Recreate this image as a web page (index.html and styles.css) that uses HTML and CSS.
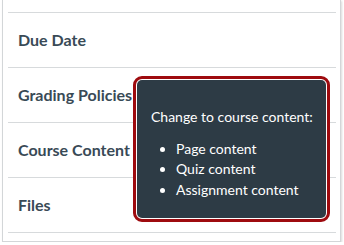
FILE: index.html
```html
<!DOCTYPE html>
<html lang="en">
<head>
    <meta charset="UTF-8">
    <meta name="viewport" content="width=device-width, initial-scale=1.0">
    <title>Course Import</title>
    <link rel="stylesheet" href="styles.css">
</head>
<body>
    <div class="panel">
        <ul class="settingsList">
            <li class="settingRow topRow"></li>
            <li class="settingRow">Due Date</li>
            <li class="settingRow">Grading Policies</li>
            <li class="settingRow">Course Content &amp;</li>
            <li class="settingRow">Files</li>
        </ul>

        <div class="callout">
            <div class="calloutInner">
                <p class="calloutTitle">Change to course content:</p>
                <ul class="calloutList">
                    <li>Page content</li>
                    <li>Quiz content</li>
                    <li>Assignment content</li>
                </ul>
            </div>
        </div>
    </div>
</body>
</html>
```

FILE: styles.css
```css
body {
    margin: 0;
    background-color: #fff;
    font-family: Lato, "Open Sans", sans-serif;
}
.panel {
    position: relative;
    margin-left: 2px;
    width: 337px;
    height: 241px;
    border: 1px solid #d3d6d8;
    border-top: 0;
    background-color: #fff;
    box-shadow: 1px 1px 2px rgba(0, 0, 0, 0.15);
}
.settingsList {
    list-style: none;
    margin: 0;
    padding: 0 4px 0 5px;
}
.settingRow {
    height: 54px;
    line-height: 54px;
    border-bottom: 1px solid #d7dadc;
    padding-left: 10px;
    font-size: 16px;
    font-weight: 700;
    color: #394a56;
    white-space: nowrap;
    overflow: hidden;
}
.topRow {
    height: 12px;
}
.callout {
    position: absolute;
    left: 130px;
    top: 76px;
    width: 189px;
    height: 138px;
    padding: 1px;
    border: 3px solid #9e0b0f;
    border-radius: 9px;
    background-color: #fff;
}
.calloutInner {
    height: 100%;
    box-sizing: border-box;
    padding: 27px 8px 0 14px;
    border-radius: 5px;
    background-color: #2d3b45;
    color: #fff;
    font-size: 14px;
    line-height: 20.5px;
}
.calloutTitle {
    margin: 0 0 11px 0;
    white-space: nowrap;
}
.calloutList {
    margin: 0;
    padding-left: 25px;
}
```
